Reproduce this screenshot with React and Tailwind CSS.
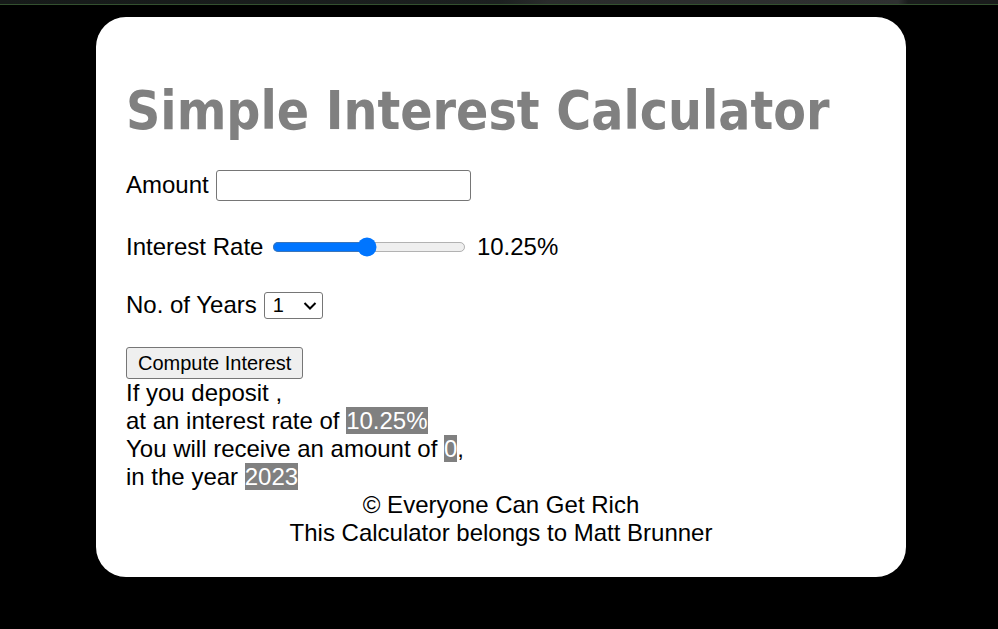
import React from 'react';

export default function App() {
  return (
    <main className="min-h-[629px] bg-black font-['Liberation_Sans',Arial,sans-serif] text-black">
      {/* Browser strip */}
      <div className="h-[4px] bg-[linear-gradient(90deg,#161a19_0%,#1c2020_50%,#2a2c2c_55%,#2f3131_90%,#1a1c1c_91%)]" />
      <div className="h-px bg-[#33502f]" />

      {/* Card */}
      <section className="ml-[96px] mt-[12px] w-[810px] rounded-[30px] bg-white pl-[30px] pr-[30px] pt-[64px] pb-[30px]">
        <h1 className="font-['DejaVu_Sans_Condensed','DejaVu_Sans',Tahoma,sans-serif] text-[53px] font-bold leading-[60px] text-[#808080] [font-stretch:condensed]">
          Simple Interest Calculator
        </h1>

        <div className="mt-[28px] flex h-[32px] items-center text-[24px]">
          <span>Amount</span>
          <input type="text" className="ml-[7px] h-[31px] w-[255px] rounded-[3px] border border-[#767676] bg-white px-1" />
        </div>

        <div className="mt-[32px] flex h-[28px] items-center text-[24px]">
          <span>Interest Rate</span>
          <input type="range" min="1" max="20" step="0.25" defaultValue="10.25" className="ml-[7px] w-[155px] [zoom:1.25]" />
          <span className="ml-[11px]">10.25%</span>
        </div>

        <div className="mt-[30px] flex h-[28px] items-center text-[24px]">
          <span>No. of Years</span>
          <div className="relative ml-[7px] flex">
            <select defaultValue="1" className="h-[27px] w-[59px] appearance-none rounded-[3px] border border-[#767676] bg-white pl-[8px] text-[20px] leading-none">
              <option>1</option>
              <option>2</option>
              <option>3</option>
              <option>4</option>
              <option>5</option>
            </select>
            <svg className="pointer-events-none absolute right-[6px] top-[10px]" width="14" height="8" viewBox="0 0 14 8" fill="none">
              <path d="M1.5 1 L7 6.5 L12.5 1" stroke="#000" strokeWidth="2" />
            </svg>
          </div>
        </div>

        <button className="mt-[28px] h-[32px] rounded-[3px] border border-[#767676] bg-[#efefef] px-[11px] text-[20px] leading-none">
          Compute Interest
        </button>

        {/* Result */}
        <div className="text-[24px] leading-[28px]">
          <p>If you deposit ,</p>
          <p>at an interest rate of <span className="bg-[#808080] text-white">10.25%</span></p>
          <p>You will receive an amount of <span className="bg-[#808080] text-white">0</span>,</p>
          <p>in the year <span className="bg-[#808080] text-white">2023</span></p>
        </div>

        <footer className="text-center text-[24px] leading-[28px]">
          <p>© Everyone Can Get Rich</p>
          <p>This Calculator belongs to Matt Brunner</p>
        </footer>
      </section>
    </main>
  );
}
